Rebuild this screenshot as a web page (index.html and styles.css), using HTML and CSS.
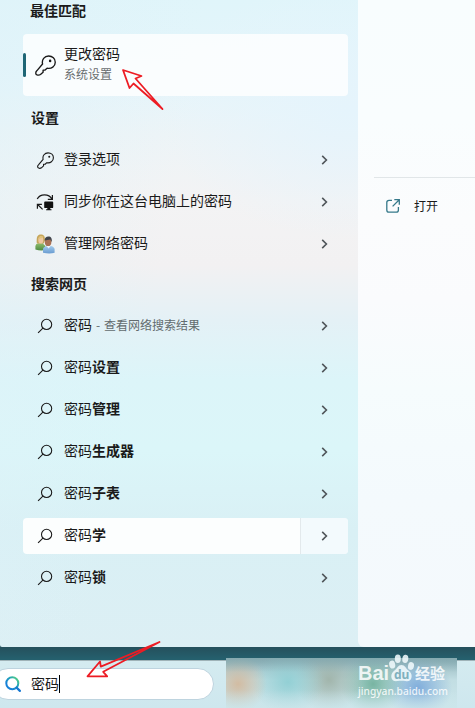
FILE: index.html
```
<!DOCTYPE html>
<html lang="zh-CN">
<head>
    <meta charset="UTF-8">
    <meta name="viewport" content="width=device-width, initial-scale=1.0">
    <title>搜索</title>
    <link rel="stylesheet" href="styles.css">
</head>
<body>
    <!-- Ícones reutilizados -->
    <svg class="defs" width="0" height="0">
        <symbol id="key" viewBox="0 0 20 20">
            <path d="M7.2 8.6C6.2 4.4 9 1 13 1c3.6 0 6.3 2.5 6.3 5.8 0 4-3.6 6.7-7.8 5.8L9.6 14.4H7.7v2L5.2 18.6c-1.3 1-4.5.8-4.5-1.2 0-.9.3-1.6 1-2.3z" fill="none" stroke="currentColor" stroke-width="1.3" stroke-linejoin="round"/>
            <circle cx="14.4" cy="5.6" r="1.2" fill="currentColor"/>
        </symbol>
        <symbol id="search" viewBox="0 0 16 16">
            <circle cx="9.6" cy="6.4" r="5.1" fill="none" stroke="currentColor" stroke-width="1.1"/>
            <path d="M5.9 10.1L1.1 14.9" fill="none" stroke="currentColor" stroke-width="1.1"/>
        </symbol>
        <symbol id="chevron" viewBox="0 0 8 10">
            <path d="M2.2 .9L6.4 5 2.2 9.1" fill="none" stroke="currentColor" stroke-width="1.6"/>
        </symbol>
    </svg>

    <div class="screen">
        <div class="panel">
            <div class="results">
                <h2 class="heading first">最佳匹配</h2>
                <div class="best">
                    <span class="accent"></span>
                    <svg class="best-icon" width="21" height="21"><use href="#key"/></svg>
                    <div class="best-text">
                        <p class="best-title">更改密码</p>
                        <p class="best-sub">系统设置</p>
                    </div>
                </div>

                <h2 class="heading">设置</h2>
                <div class="list">
                    <div class="row">
                        <span class="icon"><svg width="17" height="17"><use href="#key"/></svg></span>
                        <span class="label">登录选项</span>
                        <span class="more"><svg width="8" height="10"><use href="#chevron"/></svg></span>
                    </div>
                    <div class="row">
                        <span class="icon">
                            <svg width="18" height="18" viewBox="0 0 18 18">
                                <path d="M1.2 6C4.2.5 12.8.5 16 6M16.4 2v4.4h-4.6" fill="none" stroke="#1a1a1a" stroke-width="1.2"/>
                                <path d="M1.4 15.8v-4.5h4.5M1.6 11.5l5 4.9" fill="none" stroke="#1a1a1a" stroke-width="1.2"/>
                                <path d="M9.1 8.5h7.2q.9 0 .9.9v4.8q0 .9-.9.9h-2v1.1h1.2v1h-5.4v-1h1.2v-1.1H9.1q-.9 0-.9-.9V9.4q0-.9.9-.9z" fill="#111"/>
                            </svg>
                        </span>
                        <span class="label">同步你在这台电脑上的密码</span>
                        <span class="more"><svg width="8" height="10"><use href="#chevron"/></svg></span>
                    </div>
                    <div class="row">
                        <span class="icon">
                            <svg width="20" height="20" viewBox="0 0 20 20">
                                <defs>
                                    <linearGradient id="green" x1="0" y1="0" x2="0" y2="1">
                                        <stop offset="0" stop-color="#91bd6d"/><stop offset="1" stop-color="#4f8c43"/>
                                    </linearGradient>
                                    <linearGradient id="blue" x1="0" y1="0" x2="0" y2="1">
                                        <stop offset="0" stop-color="#a2caed"/><stop offset="1" stop-color="#689bd0"/>
                                    </linearGradient>
                                </defs>
                                <path d="M.4 15.5V12q0-2 3-2.7l4-.2 3 3v3.9q-5 1-10-.5z" fill="url(#green)"/>
                                <path d="M1.8 9.4C1.2 3 2.3.4 6 .4c3.2 0 4.1 2.2 3.9 6.4L8.8 9.6z" fill="#c5a65b"/>
                                <ellipse cx="5.8" cy="5.9" rx="2.5" ry="3.6" fill="#edc7a0"/>
                                <path d="M3.5 5c.3-2.4 2-3.2 5-2.5L7 4z" fill="#e0c477"/>
                                <path d="M8 18.8v-3.4q0-2.5 3.2-3.2l4.8-.2q3.6 1 3.6 3.5v3.3q-5 1.6-11.6 0z" fill="url(#blue)"/>
                                <ellipse cx="13.1" cy="7.8" rx="3.3" ry="4.4" fill="#a97154"/>
                                <path d="M9.6 6.5c.1-2.9 1.6-4 3.8-4 2.6 0 4 2 3.2 5.5L15.3 5.6z" fill="#40444b"/>
                                <path d="M11.5 12l2.1 2.4 2-2.4z" fill="#eef5fa"/>
                            </svg>
                        </span>
                        <span class="label">管理网络密码</span>
                        <span class="more"><svg width="8" height="10"><use href="#chevron"/></svg></span>
                    </div>
                </div>

                <h2 class="heading web">搜索网页</h2>
                <div class="list">
                    <div class="row">
                        <span class="icon"><svg width="16" height="16"><use href="#search"/></svg></span>
                        <span class="label">密码<small> - 查看网络搜索结果</small></span>
                        <span class="more"><svg width="8" height="10"><use href="#chevron"/></svg></span>
                    </div>
                    <div class="row">
                        <span class="icon"><svg width="16" height="16"><use href="#search"/></svg></span>
                        <span class="label">密码<b>设置</b></span>
                        <span class="more"><svg width="8" height="10"><use href="#chevron"/></svg></span>
                    </div>
                    <div class="row">
                        <span class="icon"><svg width="16" height="16"><use href="#search"/></svg></span>
                        <span class="label">密码<b>管理</b></span>
                        <span class="more"><svg width="8" height="10"><use href="#chevron"/></svg></span>
                    </div>
                    <div class="row">
                        <span class="icon"><svg width="16" height="16"><use href="#search"/></svg></span>
                        <span class="label">密码<b>生成器</b></span>
                        <span class="more"><svg width="8" height="10"><use href="#chevron"/></svg></span>
                    </div>
                    <div class="row">
                        <span class="icon"><svg width="16" height="16"><use href="#search"/></svg></span>
                        <span class="label">密码<b>子表</b></span>
                        <span class="more"><svg width="8" height="10"><use href="#chevron"/></svg></span>
                    </div>
                    <div class="row active">
                        <span class="icon"><svg width="16" height="16"><use href="#search"/></svg></span>
                        <span class="label">密码<b>学</b></span>
                        <span class="more"><svg width="8" height="10"><use href="#chevron"/></svg></span>
                    </div>
                    <div class="row">
                        <span class="icon"><svg width="16" height="16"><use href="#search"/></svg></span>
                        <span class="label">密码<b>锁</b></span>
                        <span class="more"><svg width="8" height="10"><use href="#chevron"/></svg></span>
                    </div>
                </div>
            </div>

            <div class="preview">
                <div class="open">
                    <svg width="14" height="14" viewBox="0 0 14 14">
                        <path d="M6 1.3H3Q.8 1.3.8 3.5V11q0 2.2 2.2 2.2h7.2q2.2 0 2.2-2.2V8M8.3.7h5v5M13 1L6.6 7.4" fill="none" stroke="#36798a" stroke-width="1.3"/>
                    </svg>
                    <span class="open-text">打开</span>
                </div>
            </div>
        </div>

        <div class="taskbar">
            <div class="search-box">
                <svg width="17" height="17" viewBox="0 0 17 17">
                    <defs>
                        <linearGradient id="ring" x1="0" y1="1" x2="1" y2="0">
                            <stop offset=".25" stop-color="#1680d8"/><stop offset=".65" stop-color="#24a6b5"/><stop offset="1" stop-color="#65db77"/>
                        </linearGradient>
                    </defs>
                    <circle cx="7.3" cy="7.3" r="6" fill="none" stroke="url(#ring)" stroke-width="2"/>
                    <path d="M11.6 11.6l3.3 3.3" stroke="#1678d2" stroke-width="2.2" stroke-linecap="round"/>
                </svg>
                <span class="typed">密码</span>
            </div>
        </div>

        <!-- Ícones desfocados sobre a barra -->
        <div class="blurred"></div>

        <div class="watermark">
            <div class="brand">
                <span class="bai">Bai</span>
                <span class="paw">
                    <svg width="27" height="28" viewBox="0 0 27 28">
                        <ellipse cx="4.2" cy="10.6" rx="3" ry="4" transform="rotate(-12 4.2 10.6)"/>
                        <ellipse cx="9.8" cy="4.7" rx="3" ry="4.2"/>
                        <ellipse cx="17.3" cy="4.9" rx="3" ry="4.1" transform="rotate(8 17.3 4.9)"/>
                        <ellipse cx="23" cy="12" rx="3" ry="3.9" transform="rotate(12 23 12)"/>
                        <path d="M13.5 11c3.4 0 4.5 3.7 7 5.6 2 1.7 3.5 3.5 3.1 6.5-.5 3.7-3.2 4.6-6.2 4-2.7-.5-5.2-.5-7.9 0-3 .6-5.9-.6-6.2-4-.2-3 1.2-4.8 3.2-6.5 2.5-1.9 3.6-5.6 7-5.6z"/>
                    </svg>
                    <i>du</i>
                </span>
                <span class="exp">经验</span>
            </div>
            <div class="site">jingyan.baidu.com</div>
        </div>

        <!-- Setas vermelhas -->
        <svg class="arrow arrow-top" width="44" height="44" viewBox="0 0 44 44">
            <path d="M2 2L20.5 8 14.5 10.5 41.5 41 12.5 15.5 8.5 20z"/>
        </svg>
        <svg class="arrow arrow-bottom" width="78" height="40" viewBox="0 0 78 40">
            <path d="M2.5 36.3L15 21.5l.8 5.2L74.5 2 18.2 31.8l4 4.5z"/>
        </svg>
    </div>
</body>
</html>
```
FILE: styles.css
```
* {
    box-sizing: border-box;
}
body {
    margin: 0;
    font-family: 'Noto Sans CJK SC', sans-serif;
    font-size: 14px;
    color: #1a1a1a;
}
h2, p {
    margin: 0;
}
svg {
    display: block;
}
.defs {
    position: absolute;
}
.screen {
    position: relative;
    display: flex;
    flex-direction: column;
    width: 475px;
    height: 708px;
    overflow: hidden;
    background: linear-gradient(#25505c 647px, #25616f 660px);
}
.panel {
    display: flex;
    height: 647px;
    border-bottom-left-radius: 2px;
    background:
        radial-gradient(ellipse 190px 130px at 350px 110px, #e5f4fc 0%, rgba(229, 244, 252, 0) 100%),
        linear-gradient(100deg, rgba(222, 242, 248, 0.5), rgba(222, 242, 248, 0) 35%),
        linear-gradient(#e0f5fa 0, #e5f5fb 80px, #edf4f7 135px, #f3f3f4 200px, #f2f1f2 265px, #e4f1f6 320px, #dcf5f9 380px, #dbf6f9 450px, #d9f0f5 530px, #dceff4 647px);
}
.results {
    width: 358px;
    padding: 0 10px 0 23px;
}
.heading {
    height: 46px;
    padding-left: 8px;
    font-size: 14px;
    font-weight: 700;
    line-height: 42px;
}
.heading.first {
    height: 34px;
    padding-left: 7px;
    line-height: 20px;
}
.best {
    display: flex;
    align-items: center;
    height: 62px;
    border-radius: 4px;
    background-color: rgba(255, 255, 255, 0.8);
}
.accent {
    width: 3px;
    height: 24px;
    border-radius: 2px;
    background-color: #1f6675;
}
.best-icon {
    margin-left: 9px;
    margin-right: 8px;
}
.best-text {
    padding-bottom: 3px;
}
.best-title {
    line-height: 20px;
}
.best-sub {
    font-size: 12px;
    line-height: 21px;
    color: #696e70;
}
.list {
    display: flex;
    flex-direction: column;
    gap: 6px;
}
.row {
    display: flex;
    width: 325px;
    height: 36px;
    border-radius: 4px;
    line-height: 32px;
}
.icon {
    display: flex;
    align-items: center;
    justify-content: center;
    width: 41px;
    padding-left: 3px;
}
.label {
    flex: 1;
}
.label small {
    font-size: 12px;
    color: #626b6e;
    white-space: pre;
    word-spacing: 1.2px;
}
.more {
    display: flex;
    align-items: center;
    justify-content: center;
    width: 48px;
    color: #50565a;
}
.row.active {
    background-color: #fcfefe;
}
.row.active .more {
    border-radius: 0 4px 4px 0;
    background-color: #f3fafd;
    box-shadow: inset 1px 0 #e3e9ec;
}
.preview {
    flex: 1;
    padding: 177px 0 0 16px;
    border-bottom-left-radius: 6px;
    background: linear-gradient(#f8fdfe, #f9fdfe 120px, #fbfcfd 220px, #fafbfd 300px, #f6fcfd 390px, #f4fafd 500px, #f4f9fc);
}
.open {
    display: flex;
    align-items: center;
    gap: 14px;
    height: 57px;
    padding-left: 12px;
    border-top: 1px solid #e1e6e8;
    font-size: 12px;
}
.open-text {
    padding-bottom: 2px;
}
.taskbar {
    display: flex;
    align-items: center;
    height: 48px;
    margin-top: 13px;
    border-top: 1px solid #9fb3b8;
    background: linear-gradient(#d4ebf0, #cee7ee);
}
.search-box {
    display: flex;
    align-items: center;
    gap: 9px;
    width: 222px;
    height: 32px;
    margin-left: -8px;
    margin-top: -1px;
    padding-left: 12px;
    border: 1px solid #bed4df;
    border-radius: 16px;
    background-color: #ffffff;
}
.typed {
    height: 18px;
    border-right: 1px solid #000000;
    line-height: 16px;
}
.blurred {
    position: absolute;
    left: 226px;
    top: 658px;
    width: 231px;
    height: 50px;
    background:
        linear-gradient(rgba(132, 169, 176, 0.7), rgba(132, 169, 176, 0) 14px),
        linear-gradient(rgba(204, 230, 235, 0) 32px, rgba(204, 230, 235, 0.6) 50px),
        radial-gradient(ellipse 34px 34px at 12px 26px, rgba(212, 184, 155, 0.9), rgba(210, 187, 163, 0) 85%),
        radial-gradient(ellipse 40px 36px at 62px 24px, rgba(138, 205, 210, 0.85), rgba(147, 205, 209, 0) 90%),
        radial-gradient(ellipse 38px 36px at 103px 22px, rgba(156, 174, 162, 0.85), rgba(163, 183, 173, 0) 90%),
        radial-gradient(ellipse 36px 34px at 147px 26px, rgba(112, 176, 155, 0.9), rgba(124, 180, 164, 0) 90%),
        radial-gradient(ellipse 38px 34px at 192px 30px, rgba(124, 170, 219, 0.95), rgba(133, 178, 220, 0) 90%),
        linear-gradient(#84a9b0 0, #a5c5cb 9px, #c2dee3 22px, #cce6eb 50px);
}
.watermark {
    position: absolute;
    left: 358px;
    top: 654px;
    width: 90px;
    color: rgba(255, 255, 255, 0.85);
    font-family: 'Noto Sans', 'Noto Sans CJK SC', sans-serif;
}
.brand {
    display: flex;
    height: 29px;
}
.bai {
    width: 30px;
    padding-top: 10px;
    font-family: 'Liberation Sans', sans-serif;
    font-size: 20px;
    font-weight: 700;
    line-height: 19px;
}
.paw {
    position: relative;
    width: 27px;
    fill: rgba(240, 249, 252, 0.88);
}
.paw i {
    position: absolute;
    left: 6px;
    top: 13px;
    font-size: 12px;
    font-style: normal;
    font-weight: 700;
    line-height: 15px;
    color: #7fb0bd;
}
.exp {
    padding-top: 11px;
    font-size: 15px;
    font-weight: 700;
    line-height: 16px;
}
.site {
    padding-top: 1px;
    font-size: 10.2px;
    font-weight: 500;
    line-height: 14px;
    white-space: nowrap;
}
.arrow {
    position: absolute;
    fill: none;
    stroke: #ed1c24;
    stroke-width: 1.8;
    stroke-linejoin: round;
}
.arrow-top {
    left: 121px;
    top: 68px;
}
.arrow-bottom {
    left: 85px;
    top: 640px;
}
```
